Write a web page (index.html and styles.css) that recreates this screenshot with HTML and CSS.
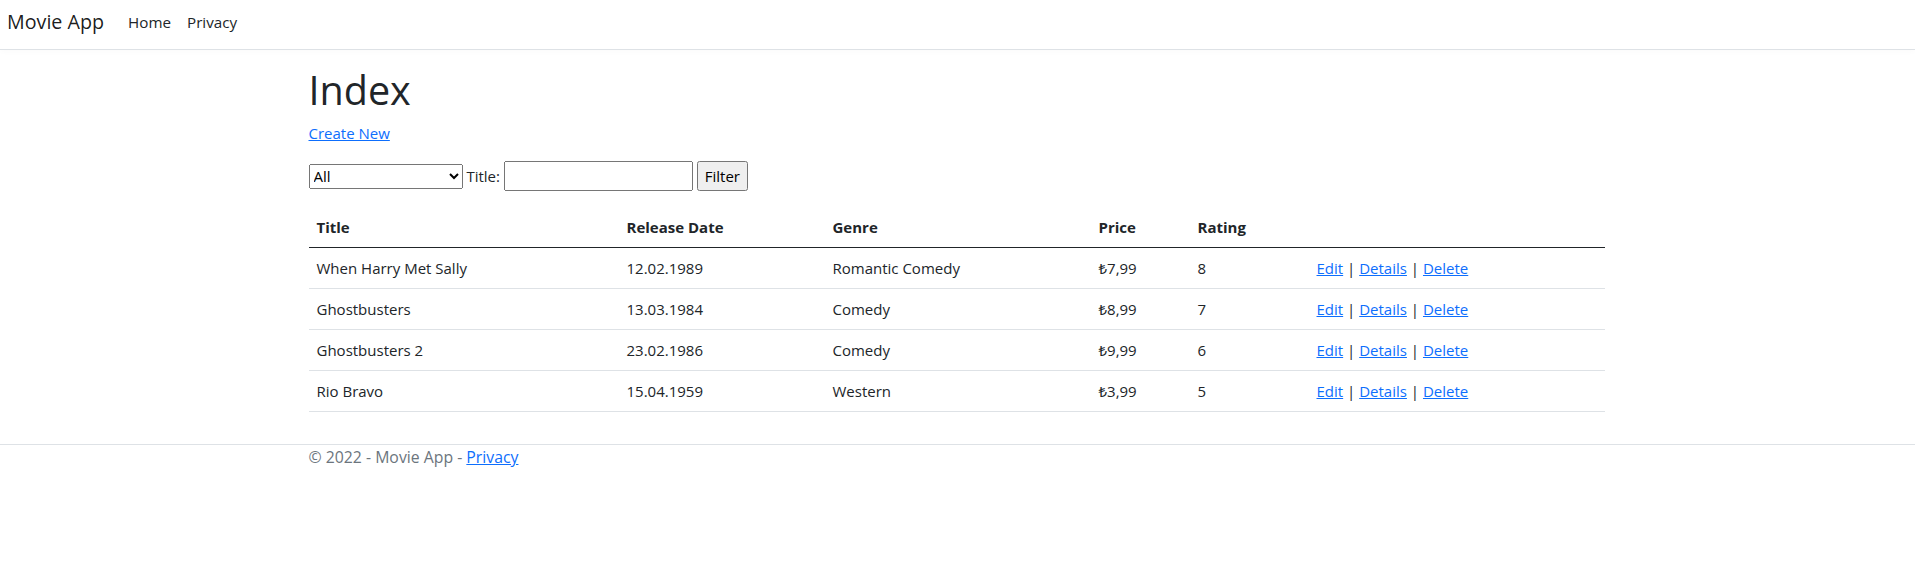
FILE: index.html
```html
<!DOCTYPE html>
<html lang="en">
<head>
<meta charset="utf-8">
<title>Index - Movie App</title>
<link rel="stylesheet" href="styles.css">
</head>
<body>
<header>
  <nav class="navbar">
    <a class="brand" href="#">Movie App</a>
    <ul class="nav">
      <li><a class="nav-link" href="#">Home</a></li>
      <li><a class="nav-link" href="#">Privacy</a></li>
    </ul>
  </nav>
</header>
<div class="container">
  <main class="main">
    <h1 class="page-title">Index</h1>
    <p class="create"><a href="#">Create New</a></p>
    <form class="filter-form">
      <p class="filter">
        <select class="genre-select">
          <option>All</option>
          <option>Comedy</option>
          <option>Romantic Comedy</option>
          <option>Western</option>
        </select>
        Title: <input class="title-input" type="text">
        <input class="filter-btn" type="submit" value="Filter">
      </p>
    </form>
    <table class="table">
      <thead>
        <tr>
          <th class="c-title">Title</th>
          <th class="c-date">Release Date</th>
          <th class="c-genre">Genre</th>
          <th class="c-price">Price</th>
          <th class="c-rating">Rating</th>
          <th class="c-actions"></th>
        </tr>
      </thead>
      <tbody>
        <tr>
          <td>When Harry Met Sally</td>
          <td>12.02.1989</td>
          <td>Romantic Comedy</td>
          <td>₺7,99</td>
          <td>8</td>
          <td><a href="#">Edit</a> | <a href="#">Details</a> | <a href="#">Delete</a></td>
        </tr>
        <tr>
          <td>Ghostbusters</td>
          <td>13.03.1984</td>
          <td>Comedy</td>
          <td>₺8,99</td>
          <td>7</td>
          <td><a href="#">Edit</a> | <a href="#">Details</a> | <a href="#">Delete</a></td>
        </tr>
        <tr>
          <td>Ghostbusters 2</td>
          <td>23.02.1986</td>
          <td>Comedy</td>
          <td>₺9,99</td>
          <td>6</td>
          <td><a href="#">Edit</a> | <a href="#">Details</a> | <a href="#">Delete</a></td>
        </tr>
        <tr>
          <td>Rio Bravo</td>
          <td>15.04.1959</td>
          <td>Western</td>
          <td>₺3,99</td>
          <td>5</td>
          <td><a href="#">Edit</a> | <a href="#">Details</a> | <a href="#">Delete</a></td>
        </tr>
      </tbody>
    </table>
  </main>
</div>
<footer class="footer">
  <div class="container">© 2022 - Movie App - <a href="#">Privacy</a></div>
</footer>
</body>
</html>
```
FILE: styles.css
```css
*, *::before, *::after { box-sizing: border-box; }

html { font-size: 15px; }

body {
  margin: 0;
  font-family: "Segoe UI", "Open Sans", "Noto Sans", "DejaVu Sans", sans-serif;
  font-size: 15px;
  line-height: 24px;
  color: #212529;
  background: #fff;
}

a { color: #0d6efd; text-decoration: underline; }

.navbar {
  display: flex;
  align-items: flex-start;
  height: 50px;
  padding: 7px 0 0 7px;
  background: #fff;
  border-bottom: 1px solid #dee2e6;
  box-shadow: 0 2px 6px rgba(0, 0, 0, 0.02);
  margin-bottom: 16px;
}

.brand {
  font-size: 19.7px;
  line-height: 30px;
  color: rgba(0, 0, 0, 0.9);
  text-decoration: none;
  margin-right: 16px;
}

.nav {
  display: flex;
  list-style: none;
  margin: 0;
  padding: 3px 0 0;
}

.nav-link {
  display: block;
  padding: 0 8px;
  font-size: 15.2px;
  line-height: 24px;
  color: #212529;
  text-decoration: none;
}

.container {
  max-width: 1320px;
  margin: 0 auto;
  padding: 0 13px 0 11px;
}

.main { padding-bottom: 16px; }

.page-title {
  font-size: 39.5px;
  font-weight: 500;
  line-height: 48px;
  margin: 2px 0 7px;
}

.create { margin: 0 0 16px; }

.filter-form { margin: 0; }

.filter { margin: 0 0 16px; }

.genre-select {
  width: 154px;
  height: 25px;
  font-family: inherit;
  font-size: 15px;
  margin: 0;
}

.title-input {
  width: 189px;
  height: 30px;
  font-family: inherit;
  font-size: 15px;
  line-height: 24px;
  margin: 0;
}

.filter-btn {
  height: 30px;
  font-family: inherit;
  font-size: 15px;
  line-height: 24px;
  padding: 1px 6px;
  margin: 0;
}

.table {
  width: 100%;
  border-collapse: collapse;
  table-layout: fixed;
  margin-bottom: 16px;
}

.table th,
.table td {
  padding: 8px;
  text-align: left;
  border-bottom: 1px solid #dee2e6;
}

.table th {
  font-weight: 700;
  vertical-align: bottom;
  border-bottom-color: #212529;
}

.c-title { width: 310px; }
.c-date { width: 206px; }
.c-genre { width: 266px; }
.c-price { width: 99px; }
.c-rating { width: 119px; }

.footer {
  border-top: 1px solid #dee2e6;
  color: #6c757d;
  font-size: 15.8px;
  white-space: nowrap;
}
```
